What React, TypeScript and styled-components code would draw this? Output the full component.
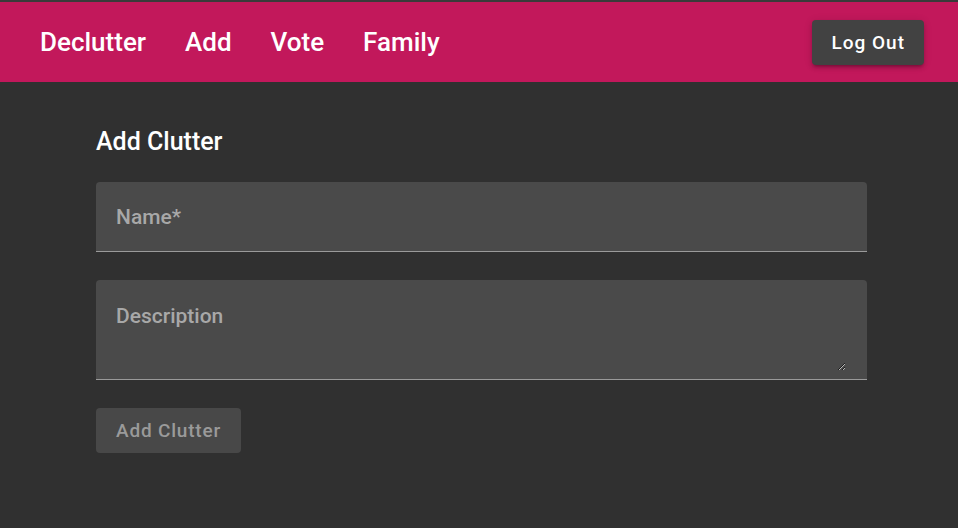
import React from "react";
import styled, { createGlobalStyle } from "styled-components";

const GlobalStyle = createGlobalStyle`
    html, body {
        margin: 0;
        padding: 0;
        background: #303030;
        font-family: Roboto, "Noto Sans", sans-serif;
    }
`;

const Page = styled.div`
    min-height: 528px;
    background: #303030;
    border-top: 2px solid #3a3a3a;
`;

const Header = styled.header`
    display: flex;
    align-items: center;
    justify-content: space-between;
    height: 80px;
    padding: 0 34px 0 40px;
    background: #c2185b;
`;

const Nav = styled.nav`
    display: flex;
    align-items: center;
    gap: 39px;
`;

const NavLink = styled.a`
    color: #fff;
    font-size: 26px;
    font-weight: 500;
    text-decoration: none;
    cursor: pointer;
`;

const LogOut = styled.button`
    height: 45px;
    padding: 0 19px;
    border: none;
    border-radius: 4px;
    background: #424242;
    color: #fff;
    font-family: Roboto, sans-serif;
    font-size: 19px;
    font-weight: 500;
    letter-spacing: 1px;
    box-shadow: 0 3px 3px -2px rgba(0, 0, 0, 0.25), 0 3px 4px 0 rgba(0, 0, 0, 0.14), 0 1px 8px 0 rgba(0, 0, 0, 0.12);
    cursor: pointer;
`;

const Main = styled.main`
    width: 771px;
    margin: 0 auto;
    padding-top: 45px;
    padding-left: 5px;

    h2 {
        margin: 0 0 26px;
        color: #fff;
        font-size: 25px;
        font-weight: 500;
        line-height: 29px;
    }
`;

const Form = styled.form`
    display: flex;
    flex-direction: column;
    align-items: flex-start;
    gap: 28px;
`;

const Field = styled.div<{ tall?: boolean }>`
    display: flex;
    width: 100%;
    box-sizing: border-box;
    height: ${(p) => (p.tall ? "100px" : "70px")};
    padding: ${(p) => (p.tall ? "23px 21px 8px 20px" : "0 20px")};
    align-items: ${(p) => (p.tall ? "stretch" : "center")};
    background: #4a4a4a;
    border-radius: 4px 4px 0 0;
    border-bottom: 1px solid #9a9a9a;

    input, textarea {
        flex: 1;
        border: none;
        outline: none;
        background: transparent;
        color: #fff;
        font-family: Roboto, sans-serif;
        font-size: 21px;
        padding: 0;
        margin: 0;
    }

    input::placeholder, textarea::placeholder {
        color: #a8a8a8;
        font-weight: 500;
    }

    textarea {
        resize: vertical;
        line-height: 26px;
    }
`;

const Submit = styled.button`
    height: 45px;
    padding: 0 20px;
    border: none;
    border-radius: 4px;
    background: #484848;
    color: #9a9a9a;
    font-family: Roboto, sans-serif;
    font-size: 19px;
    font-weight: 500;
    letter-spacing: 0.8px;
`;

export default function App() {
    return (
        <Page>
            <GlobalStyle />
            <Header>
                <Nav>
                    <NavLink>Declutter</NavLink>
                    <NavLink>Add</NavLink>
                    <NavLink>Vote</NavLink>
                    <NavLink>Family</NavLink>
                </Nav>
                <LogOut>Log Out</LogOut>
            </Header>
            <Main>
                <h2>Add Clutter</h2>
                <Form onSubmit={(e) => e.preventDefault()}>
                    <Field>
                        <input placeholder="Name*" />
                    </Field>
                    <Field tall>
                        <textarea placeholder="Description" />
                    </Field>
                    <Submit disabled>Add Clutter</Submit>
                </Form>
            </Main>
        </Page>
    );
}
